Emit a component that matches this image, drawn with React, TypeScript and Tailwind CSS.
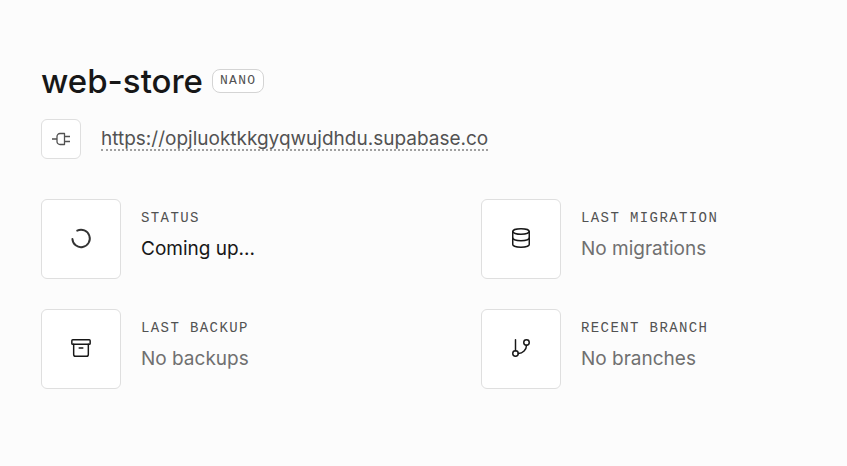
import React from 'react';
import { Archive, Database, GitBranch } from 'lucide-react';

const SpinnerIcon = () => (
  <svg width="24" height="24" viewBox="0 0 24 24" fill="none" stroke="#333333" strokeWidth="1.9" strokeLinecap="round">
    <path d="M3.4 12.9A8.7 8.7 0 1 0 8.2 4.7" />
  </svg>
);

const PlugIcon = () => (
  <svg width="20" height="20" viewBox="0 0 20 20" fill="none" stroke="#525252" strokeWidth="1.3" strokeLinejoin="round">
    <path d="M1 10H6M13.5 4.5H9A3 3 0 0 0 6 7.5V12.5A3 3 0 0 0 9 15.5H13.5ZM13.5 7.5H19M13.5 12.5H19" />
  </svg>
);

const stats = [
  { label: 'Status', value: 'Coming up...', icon: <SpinnerIcon />, active: true },
  { label: 'Last migration', value: 'No migrations', icon: <Database size={22} strokeWidth={1.6} />, active: false },
  { label: 'Last backup', value: 'No backups', icon: <Archive size={22} strokeWidth={1.6} />, active: false },
  { label: 'Recent branch', value: 'No branches', icon: <GitBranch size={22} strokeWidth={1.6} />, active: false },
];

const App: React.FC = () => {
  return (
    <main className="min-h-screen bg-[#fcfcfc] px-[41px] py-15 font-['Inter',sans-serif] text-[#171717]">
      <header className="flex items-center gap-[9px]">
        <h1 className="text-[33px] leading-[42px] font-medium">web-store</h1>
        <span className="rounded-lg border border-[#d4d4d4] bg-white px-[7px] font-['Liberation_Mono',monospace] text-[13px] leading-[22px] tracking-widest text-[#525252]">
          NANO
        </span>
      </header>

      <div className="mt-[17px] flex items-center gap-5">
        <button type="button" aria-label="Connect" className="flex size-10 shrink-0 items-center justify-center rounded-md border border-[#dfdfdf] bg-white">
          <PlugIcon />
        </button>
        <a href="https://opjluoktkkgyqwujdhdu.supabase.co" className="border-b-2 border-dotted border-[#a0a0a0] pt-0.5 text-[19px] leading-5 text-[#525252]">
          https://opjluoktkkgyqwujdhdu.supabase.co
        </a>
      </div>

      <div className="mt-10 grid grid-cols-2 gap-x-[115px] gap-y-[30px]">
        {stats.map((stat) => (
          <div key={stat.label} className="flex gap-5">
            <div className="flex size-20 shrink-0 items-center justify-center rounded-md border border-[#dfdfdf] bg-white pb-0.5">
              {stat.icon}
            </div>
            <div className="pt-[9px]">
              <h2 className="font-['Liberation_Mono',monospace] text-sm leading-5 tracking-widest whitespace-nowrap text-[#525252] uppercase">
                {stat.label}
              </h2>
              <p className={stat.active ? 'mt-[7px] text-[19px] leading-7' : 'mt-[7px] text-[19px] leading-7 text-[#707070]'}>
                {stat.value}
              </p>
            </div>
          </div>
        ))}
      </div>
    </main>
  );
};

export default App;
